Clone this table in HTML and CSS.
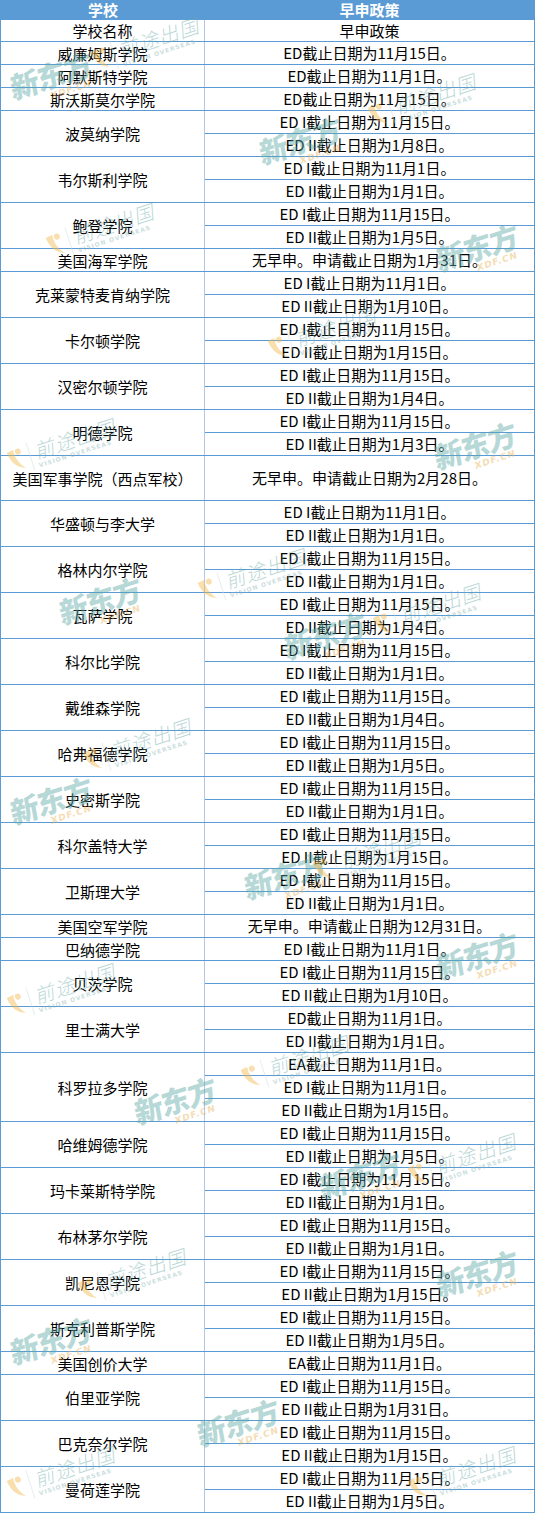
FILE: index.html
```html
<!DOCTYPE html>
<html lang="zh-CN">
<head>
<meta charset="utf-8">
<title>早申政策</title>
<link rel="stylesheet" href="styles.css">
</head>
<body>
<div class="table">
  <div class="head">
    <div class="hname">学校</div>
    <div class="hpol">早申政策</div>
  </div>
  <div class="group first"><div class="name">学校名称</div><div class="pols"><div class="p">早申政策</div></div></div>
  <div class="group"><div class="name">威廉姆斯学院</div><div class="pols"><div class="p">ED截止日期为11月15日。</div></div></div>
  <div class="group"><div class="name">阿默斯特学院</div><div class="pols"><div class="p">ED截止日期为11月1日。</div></div></div>
  <div class="group"><div class="name">斯沃斯莫尔学院</div><div class="pols"><div class="p">ED截止日期为11月15日。</div></div></div>
  <div class="group"><div class="name">波莫纳学院</div><div class="pols"><div class="p">ED I截止日期为11月15日。</div><div class="p">ED II截止日期为1月8日。</div></div></div>
  <div class="group"><div class="name">韦尔斯利学院</div><div class="pols"><div class="p">ED I截止日期为11月1日。</div><div class="p">ED II截止日期为1月1日。</div></div></div>
  <div class="group"><div class="name">鲍登学院</div><div class="pols"><div class="p">ED I截止日期为11月15日。</div><div class="p">ED II截止日期为1月5日。</div></div></div>
  <div class="group"><div class="name">美国海军学院</div><div class="pols"><div class="p">无早申。申请截止日期为1月31日。</div></div></div>
  <div class="group"><div class="name">克莱蒙特麦肯纳学院</div><div class="pols"><div class="p">ED I截止日期为11月1日。</div><div class="p">ED II截止日期为1月10日。</div></div></div>
  <div class="group"><div class="name">卡尔顿学院</div><div class="pols"><div class="p">ED I截止日期为11月15日。</div><div class="p">ED II截止日期为1月15日。</div></div></div>
  <div class="group"><div class="name">汉密尔顿学院</div><div class="pols"><div class="p">ED I截止日期为11月15日。</div><div class="p">ED II截止日期为1月4日。</div></div></div>
  <div class="group"><div class="name">明德学院</div><div class="pols"><div class="p">ED I截止日期为11月15日。</div><div class="p">ED II截止日期为1月3日。</div></div></div>
  <div class="group"><div class="name">美国军事学院（西点军校）</div><div class="pols"><div class="p tall">无早申。申请截止日期为2月28日。</div></div></div>
  <div class="group"><div class="name">华盛顿与李大学</div><div class="pols"><div class="p">ED I截止日期为11月1日。</div><div class="p">ED II截止日期为1月1日。</div></div></div>
  <div class="group"><div class="name">格林内尔学院</div><div class="pols"><div class="p">ED I截止日期为11月15日。</div><div class="p">ED II截止日期为1月1日。</div></div></div>
  <div class="group"><div class="name">瓦萨学院</div><div class="pols"><div class="p">ED I截止日期为11月15日。</div><div class="p">ED II截止日期为1月4日。</div></div></div>
  <div class="group"><div class="name">科尔比学院</div><div class="pols"><div class="p">ED I截止日期为11月15日。</div><div class="p">ED II截止日期为1月1日。</div></div></div>
  <div class="group"><div class="name">戴维森学院</div><div class="pols"><div class="p">ED I截止日期为11月15日。</div><div class="p">ED II截止日期为1月4日。</div></div></div>
  <div class="group"><div class="name">哈弗福德学院</div><div class="pols"><div class="p">ED I截止日期为11月15日。</div><div class="p">ED II截止日期为1月5日。</div></div></div>
  <div class="group"><div class="name">史密斯学院</div><div class="pols"><div class="p">ED I截止日期为11月15日。</div><div class="p">ED II截止日期为1月1日。</div></div></div>
  <div class="group"><div class="name">科尔盖特大学</div><div class="pols"><div class="p">ED I截止日期为11月15日。</div><div class="p">ED II截止日期为1月15日。</div></div></div>
  <div class="group"><div class="name">卫斯理大学</div><div class="pols"><div class="p">ED I截止日期为11月15日。</div><div class="p">ED II截止日期为1月1日。</div></div></div>
  <div class="group"><div class="name">美国空军学院</div><div class="pols"><div class="p">无早申。申请截止日期为12月31日。</div></div></div>
  <div class="group"><div class="name">巴纳德学院</div><div class="pols"><div class="p">ED I截止日期为11月1日。</div></div></div>
  <div class="group"><div class="name">贝茨学院</div><div class="pols"><div class="p">ED I截止日期为11月15日。</div><div class="p">ED II截止日期为1月10日。</div></div></div>
  <div class="group"><div class="name">里士满大学</div><div class="pols"><div class="p">ED截止日期为11月1日。</div><div class="p">ED II截止日期为1月1日。</div></div></div>
  <div class="group"><div class="name">科罗拉多学院</div><div class="pols"><div class="p">EA截止日期为11月1日。</div><div class="p">ED I截止日期为11月1日。</div><div class="p">ED II截止日期为1月15日。</div></div></div>
  <div class="group"><div class="name">哈维姆德学院</div><div class="pols"><div class="p">ED I截止日期为11月15日。</div><div class="p">ED II截止日期为1月5日。</div></div></div>
  <div class="group"><div class="name">玛卡莱斯特学院</div><div class="pols"><div class="p">ED I截止日期为11月15日。</div><div class="p">ED II截止日期为1月1日。</div></div></div>
  <div class="group"><div class="name">布林茅尔学院</div><div class="pols"><div class="p">ED I截止日期为11月15日。</div><div class="p">ED II截止日期为1月1日。</div></div></div>
  <div class="group"><div class="name">凯尼恩学院</div><div class="pols"><div class="p">ED I截止日期为11月15日。</div><div class="p">ED II截止日期为1月15日。</div></div></div>
  <div class="group"><div class="name">斯克利普斯学院</div><div class="pols"><div class="p">ED I截止日期为11月15日。</div><div class="p">ED II截止日期为1月5日。</div></div></div>
  <div class="group"><div class="name">美国创价大学</div><div class="pols"><div class="p">EA截止日期为11月1日。</div></div></div>
  <div class="group"><div class="name">伯里亚学院</div><div class="pols"><div class="p">ED I截止日期为11月15日。</div><div class="p">ED II截止日期为1月31日。</div></div></div>
  <div class="group"><div class="name">巴克奈尔学院</div><div class="pols"><div class="p">ED I截止日期为11月15日。</div><div class="p">ED II截止日期为1月15日。</div></div></div>
  <div class="group"><div class="name">曼荷莲学院</div><div class="pols"><div class="p">ED I截止日期为11月15日。</div><div class="p">ED II截止日期为1月5日。</div></div></div>

  <div class="wm-layer" aria-hidden="true">
    <div class="xdf" style="left:4px;top:58px"><span class="xdf-t">新东方</span><span class="xdf-s">XDF.CN</span></div>
    <div class="xdf" style="left:253px;top:123px"><span class="xdf-t">新东方</span><span class="xdf-s">XDF.CN</span></div>
    <div class="xdf" style="left:430px;top:230px"><span class="xdf-t">新东方</span><span class="xdf-s">XDF.CN</span></div>
    <div class="xdf" style="left:428px;top:428px"><span class="xdf-t">新东方</span><span class="xdf-s">XDF.CN</span></div>
    <div class="xdf" style="left:53px;top:583px"><span class="xdf-t">新东方</span><span class="xdf-s">XDF.CN</span></div>
    <div class="xdf" style="left:278px;top:618px"><span class="xdf-t">新东方</span><span class="xdf-s">XDF.CN</span></div>
    <div class="xdf" style="left:4px;top:783px"><span class="xdf-t">新东方</span><span class="xdf-s">XDF.CN</span></div>
    <div class="xdf" style="left:238px;top:858px"><span class="xdf-t">新东方</span><span class="xdf-s">XDF.CN</span></div>
    <div class="xdf" style="left:430px;top:938px"><span class="xdf-t">新东方</span><span class="xdf-s">XDF.CN</span></div>
    <div class="xdf" style="left:128px;top:1083px"><span class="xdf-t">新东方</span><span class="xdf-s">XDF.CN</span></div>
    <div class="xdf" style="left:313px;top:1158px"><span class="xdf-t">新东方</span><span class="xdf-s">XDF.CN</span></div>
    <div class="xdf" style="left:430px;top:1256px"><span class="xdf-t">新东方</span><span class="xdf-s">XDF.CN</span></div>
    <div class="xdf" style="left:4px;top:1323px"><span class="xdf-t">新东方</span><span class="xdf-s">XDF.CN</span></div>
    <div class="xdf" style="left:191px;top:1405px"><span class="xdf-t">新东方</span><span class="xdf-s">XDF.CN</span></div>

    <div class="qt" style="left:88px;top:26px"><svg class="qt-mark" viewBox="0 0 20 28" width="20" height="28"><path d="M3 4 C4 16 10 22 17 24 C12 19 9 12 10 3 Z" /><circle cx="14" cy="6" r="3" /></svg><span class="qt-box"><span class="qt-t">前途出国</span><span class="qt-s">VISION OVERSEAS</span></span></div>
    <div class="qt" style="left:365px;top:82px"><svg class="qt-mark" viewBox="0 0 20 28" width="20" height="28"><path d="M3 4 C4 16 10 22 17 24 C12 19 9 12 10 3 Z" /><circle cx="14" cy="6" r="3" /></svg><span class="qt-box"><span class="qt-t">前途出国</span><span class="qt-s">VISION OVERSEAS</span></span></div>
    <div class="qt" style="left:43px;top:212px"><svg class="qt-mark" viewBox="0 0 20 28" width="20" height="28"><path d="M3 4 C4 16 10 22 17 24 C12 19 9 12 10 3 Z" /><circle cx="14" cy="6" r="3" /></svg><span class="qt-box"><span class="qt-t">前途出国</span><span class="qt-s">VISION OVERSEAS</span></span></div>
    <div class="qt" style="left:265px;top:315px"><svg class="qt-mark" viewBox="0 0 20 28" width="20" height="28"><path d="M3 4 C4 16 10 22 17 24 C12 19 9 12 10 3 Z" /><circle cx="14" cy="6" r="3" /></svg><span class="qt-box"><span class="qt-t">前途出国</span><span class="qt-s">VISION OVERSEAS</span></span></div>
    <div class="qt" style="left:4px;top:427px"><svg class="qt-mark" viewBox="0 0 20 28" width="20" height="28"><path d="M3 4 C4 16 10 22 17 24 C12 19 9 12 10 3 Z" /><circle cx="14" cy="6" r="3" /></svg><span class="qt-box"><span class="qt-t">前途出国</span><span class="qt-s">VISION OVERSEAS</span></span></div>
    <div class="qt" style="left:195px;top:557px"><svg class="qt-mark" viewBox="0 0 20 28" width="20" height="28"><path d="M3 4 C4 16 10 22 17 24 C12 19 9 12 10 3 Z" /><circle cx="14" cy="6" r="3" /></svg><span class="qt-box"><span class="qt-t">前途出国</span><span class="qt-s">VISION OVERSEAS</span></span></div>
    <div class="qt" style="left:370px;top:592px"><svg class="qt-mark" viewBox="0 0 20 28" width="20" height="28"><path d="M3 4 C4 16 10 22 17 24 C12 19 9 12 10 3 Z" /><circle cx="14" cy="6" r="3" /></svg><span class="qt-box"><span class="qt-t">前途出国</span><span class="qt-s">VISION OVERSEAS</span></span></div>
    <div class="qt" style="left:80px;top:727px"><svg class="qt-mark" viewBox="0 0 20 28" width="20" height="28"><path d="M3 4 C4 16 10 22 17 24 C12 19 9 12 10 3 Z" /><circle cx="14" cy="6" r="3" /></svg><span class="qt-box"><span class="qt-t">前途出国</span><span class="qt-s">VISION OVERSEAS</span></span></div>
    <div class="qt" style="left:310px;top:837px"><svg class="qt-mark" viewBox="0 0 20 28" width="20" height="28"><path d="M3 4 C4 16 10 22 17 24 C12 19 9 12 10 3 Z" /><circle cx="14" cy="6" r="3" /></svg><span class="qt-box"><span class="qt-t">前途出国</span><span class="qt-s">VISION OVERSEAS</span></span></div>
    <div class="qt" style="left:4px;top:972px"><svg class="qt-mark" viewBox="0 0 20 28" width="20" height="28"><path d="M3 4 C4 16 10 22 17 24 C12 19 9 12 10 3 Z" /><circle cx="14" cy="6" r="3" /></svg><span class="qt-box"><span class="qt-t">前途出国</span><span class="qt-s">VISION OVERSEAS</span></span></div>
    <div class="qt" style="left:238px;top:1044px"><svg class="qt-mark" viewBox="0 0 20 28" width="20" height="28"><path d="M3 4 C4 16 10 22 17 24 C12 19 9 12 10 3 Z" /><circle cx="14" cy="6" r="3" /></svg><span class="qt-box"><span class="qt-t">前途出国</span><span class="qt-s">VISION OVERSEAS</span></span></div>
    <div class="qt" style="left:405px;top:1142px"><svg class="qt-mark" viewBox="0 0 20 28" width="20" height="28"><path d="M3 4 C4 16 10 22 17 24 C12 19 9 12 10 3 Z" /><circle cx="14" cy="6" r="3" /></svg><span class="qt-box"><span class="qt-t">前途出国</span><span class="qt-s">VISION OVERSEAS</span></span></div>
    <div class="qt" style="left:75px;top:1257px"><svg class="qt-mark" viewBox="0 0 20 28" width="20" height="28"><path d="M3 4 C4 16 10 22 17 24 C12 19 9 12 10 3 Z" /><circle cx="14" cy="6" r="3" /></svg><span class="qt-box"><span class="qt-t">前途出国</span><span class="qt-s">VISION OVERSEAS</span></span></div>
    <div class="qt" style="left:405px;top:1455px"><svg class="qt-mark" viewBox="0 0 20 28" width="20" height="28"><path d="M3 4 C4 16 10 22 17 24 C12 19 9 12 10 3 Z" /><circle cx="14" cy="6" r="3" /></svg><span class="qt-box"><span class="qt-t">前途出国</span><span class="qt-s">VISION OVERSEAS</span></span></div>
    <div class="qt" style="left:4px;top:1455px"><svg class="qt-mark" viewBox="0 0 20 28" width="20" height="28"><path d="M3 4 C4 16 10 22 17 24 C12 19 9 12 10 3 Z" /><circle cx="14" cy="6" r="3" /></svg><span class="qt-box"><span class="qt-t">前途出国</span><span class="qt-s">VISION OVERSEAS</span></span></div>
  </div>
</div>
</body>
</html>
```

FILE: styles.css
```css
html, body {
  margin: 0;
  padding: 0;
  background: #ffffff;
}

body {
  font-family: "Noto Sans CJK SC", "Microsoft YaHei", sans-serif;
  color: #000000;
  font-size: 15px;
}

.table {
  position: relative;
  width: 535px;
  box-sizing: border-box;
  border-left: 1px solid #5b9bd5;
  border-right: 1px solid #5b9bd5;
}

.head {
  display: flex;
  height: 20px;
  background: #5b9bd5;
  color: #ffffff;
  font-weight: bold;
  line-height: 20px;
}

.hname {
  width: 204px;
  text-align: center;
}

.hpol {
  flex: 1;
  text-align: center;
}

.group {
  display: flex;
  border-bottom: 1px solid #5b9bd5;
}

.name {
  width: 203px;
  flex: none;
  border-right: 1px solid #b4c6e7;
  display: flex;
  align-items: center;
  justify-content: center;
  white-space: nowrap;
}

.pols {
  flex: 1;
  display: flex;
  flex-direction: column;
}

.p {
  height: 22px;
  line-height: 22px;
  text-align: center;
  white-space: nowrap;
}

.p + .p {
  border-top: 1px solid #5b9bd5;
}

.first .p {
  height: 21px;
  line-height: 21px;
}

.p.tall {
  height: 44px;
  line-height: 44px;
}

/* watermark overlay */
.wm-layer {
  position: absolute;
  top: 0;
  left: -1px;
  width: 535px;
  height: 100%;
  overflow: hidden;
  pointer-events: none;
}

.xdf {
  position: absolute;
  width: 95px;
  height: 45px;
  display: flex;
  flex-direction: column;
  align-items: center;
  transform: rotate(-18deg) skewX(-8deg);
  opacity: 0.45;
}

.xdf-t {
  font-size: 29px;
  line-height: 32px;
  font-weight: 900;
  color: #5fa9a6;
  letter-spacing: -1px;
}

.xdf-s {
  align-self: flex-end;
  margin-right: 8px;
  font-family: "DejaVu Sans", sans-serif;
  font-size: 9px;
  line-height: 10px;
  font-weight: bold;
  color: #e9b25a;
  letter-spacing: 1px;
}

.qt {
  position: absolute;
  width: 120px;
  height: 36px;
  display: flex;
  align-items: center;
  gap: 4px;
  transform: rotate(-18deg);
  opacity: 0.45;
}

.qt-mark {
  flex: none;
  fill: #f3b94d;
}

.qt-box {
  display: flex;
  flex-direction: column;
  align-items: flex-start;
  border-left: 1px solid #c9dcdc;
  padding-left: 5px;
}

.qt-t {
  font-size: 20px;
  line-height: 22px;
  font-weight: 300;
  font-style: italic;
  color: #6aaaa8;
  letter-spacing: 1px;
}

.qt-s {
  font-family: "DejaVu Sans", sans-serif;
  font-size: 6px;
  line-height: 7px;
  font-weight: bold;
  color: #8ab8b8;
  letter-spacing: 1px;
}
```
